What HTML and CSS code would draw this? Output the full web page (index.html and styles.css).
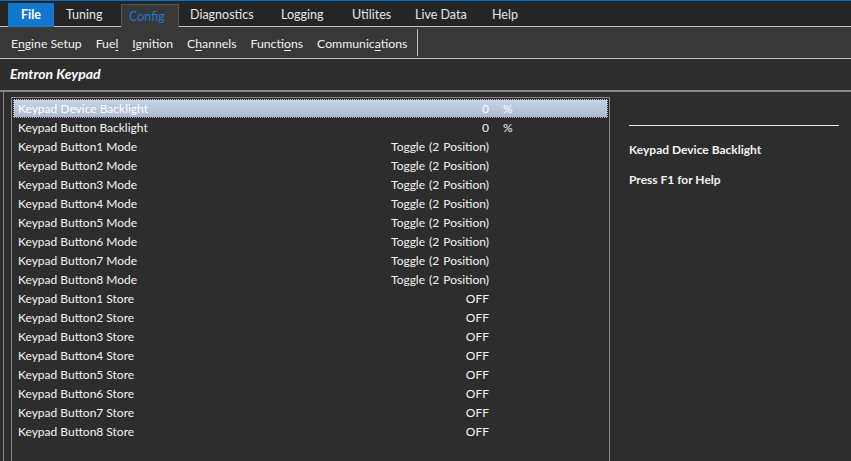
FILE: index.html
```html
<!DOCTYPE html>
<html>
<head>
<meta charset="utf-8">
<link rel="stylesheet" href="styles.css">
</head>
<body>
<div class="app">
  <div class="topline"></div>
  <nav class="tabs">
    <div class="tab tab-file">File</div>
    <div class="tab tab-tuning">Tuning</div>
    <div class="tab tab-config">Config</div>
    <div class="tab tab-diag">Diagnostics</div>
    <div class="tab tab-log">Logging</div>
    <div class="tab tab-util">Utilites</div>
    <div class="tab tab-live">Live Data</div>
    <div class="tab tab-help">Help</div>
  </nav>
  <nav class="submenu">
    <span class="item">E<u>n</u>gine Setup</span>
    <span class="item">Fue<u>l</u></span>
    <span class="item"><u>I</u>gnition</span>
    <span class="item">C<u>h</u>annels</span>
    <span class="item">Functi<u>o</u>ns</span>
    <span class="item">Communic<u>a</u>tions</span>
    <span class="sep"></span>
  </nav>
  <div class="titlebar">Emtron Keypad</div>
  <div class="content">
    <div class="list">
      <div class="row sel"><span class="label">Keypad Device Backlight</span><span class="val">0</span><span class="unit">%</span></div>
      <div class="row"><span class="label">Keypad Button Backlight</span><span class="val">0</span><span class="unit">%</span></div>
      <div class="row"><span class="label">Keypad Button1 Mode</span><span class="val">Toggle (2 Position)</span><span class="unit"></span></div>
      <div class="row"><span class="label">Keypad Button2 Mode</span><span class="val">Toggle (2 Position)</span><span class="unit"></span></div>
      <div class="row"><span class="label">Keypad Button3 Mode</span><span class="val">Toggle (2 Position)</span><span class="unit"></span></div>
      <div class="row"><span class="label">Keypad Button4 Mode</span><span class="val">Toggle (2 Position)</span><span class="unit"></span></div>
      <div class="row"><span class="label">Keypad Button5 Mode</span><span class="val">Toggle (2 Position)</span><span class="unit"></span></div>
      <div class="row"><span class="label">Keypad Button6 Mode</span><span class="val">Toggle (2 Position)</span><span class="unit"></span></div>
      <div class="row"><span class="label">Keypad Button7 Mode</span><span class="val">Toggle (2 Position)</span><span class="unit"></span></div>
      <div class="row"><span class="label">Keypad Button8 Mode</span><span class="val">Toggle (2 Position)</span><span class="unit"></span></div>
      <div class="row"><span class="label">Keypad Button1 Store</span><span class="val">OFF</span><span class="unit"></span></div>
      <div class="row"><span class="label">Keypad Button2 Store</span><span class="val">OFF</span><span class="unit"></span></div>
      <div class="row"><span class="label">Keypad Button3 Store</span><span class="val">OFF</span><span class="unit"></span></div>
      <div class="row"><span class="label">Keypad Button4 Store</span><span class="val">OFF</span><span class="unit"></span></div>
      <div class="row"><span class="label">Keypad Button5 Store</span><span class="val">OFF</span><span class="unit"></span></div>
      <div class="row"><span class="label">Keypad Button6 Store</span><span class="val">OFF</span><span class="unit"></span></div>
      <div class="row"><span class="label">Keypad Button7 Store</span><span class="val">OFF</span><span class="unit"></span></div>
      <div class="row"><span class="label">Keypad Button8 Store</span><span class="val">OFF</span><span class="unit"></span></div>
    </div>
    <aside class="help">
      <div class="help-rule"></div>
      <div class="help-title">Keypad Device Backlight</div>
      <div class="help-text">Press F1 for Help</div>
    </aside>
  </div>
</div>
</body>
</html>
```

FILE: styles.css
```css
* { box-sizing: border-box; }
html, body {
  margin: 0;
  padding: 0;
  background: #2d2d2d;
  overflow: hidden;
}
.app {
  width: 851px;
  height: 461px;
  overflow: hidden;
  font-family: Lato, "Noto Sans", sans-serif;
  font-size: 12px;
  color: #f2f2f2;
  background: #2d2d2d;
  display: flex;
  flex-direction: column;
}
.topline {
  height: 1px;
  background: #0b6fc4;
  flex: none;
}
.tabs {
  height: 26px;
  flex: none;
  background: #252525;
  border-bottom: 1px solid #c4c4c4;
  display: flex;
  align-items: flex-end;
  padding-left: 8px;
}
.tab {
  height: 23px;
  line-height: 24px;
  font-size: 12.5px;
  color: #e6e6e6;
  padding-left: 11px;
  white-space: nowrap;
}
.tab-file {
  width: 46px;
  padding-left: 0;
  text-align: center;
  background: #1176cc;
  color: #ffffff;
  font-weight: bold;
  margin-bottom: -1px;
  height: 24px;
  line-height: 24px;
}
.tab-tuning { width: 67px; padding-left: 12px; }
.tab-config {
  width: 58px;
  padding-left: 7px;
  height: 23px;
  line-height: 23px;
  margin-bottom: -1px;
  background: #383838;
  border: 1px solid #575757;
  border-bottom: none;
  color: #1c79d2;
}
.tab-diag { width: 91px; }
.tab-log { width: 71px; }
.tab-util { width: 63px; }
.tab-live { width: 77px; }
.tab-help { width: 60px; }

.submenu {
  height: 32px;
  flex: none;
  background: #383838;
  border-bottom: 1px solid #c4c4c4;
  display: flex;
  align-items: center;
  padding-left: 11px;
  gap: 14px;
  font-size: 12.25px;
  color: #f2f2f2;
}
.submenu .item { padding-top: 1px; }
.submenu u { text-decoration-thickness: 1px; text-underline-offset: 2px; }
.sep {
  width: 1px;
  height: 27px;
  background: #b8b8b8;
  margin-left: -4px;
}
.titlebar {
  height: 33px;
  flex: none;
  background: #2d2d2d;
  border-bottom: 2px solid #8a8a8a;
  padding-left: 10px;
  line-height: 29px;
  font-weight: bold;
  font-style: italic;
  font-size: 14px;
  color: #ffffff;
}
.content {
  flex: 1;
  display: flex;
  margin-left: 3px;
  border-left: 1px solid #8a8a8a;
  padding-top: 5px;
  min-height: 0;
}
.list {
  width: 599px;
  margin-left: 7px;
  height: 400px;
  border: 1px solid #8c8c8c;
  border-bottom: none;
  padding: 1px 1px 0 1px;
  flex: none;
}
.row {
  height: 19px;
  display: grid;
  grid-template-columns: 1fr 121px 119px;
  align-items: center;
  padding-left: 5px;
  white-space: nowrap;
  color: #f4f4f4;
}
.row.sel {
  height: 19px;
  background: linear-gradient(#c9d5e5, #a9b9cd);
  outline: 1px dotted #1a1a1a;
  outline-offset: -1px;
  color: #ffffff;
}
.val { text-align: right; word-spacing: 1px; }
.unit { padding-left: 14px; }
.help {
  flex: 1;
  padding: 28px 12px 0 19px;
}
.help-rule {
  height: 1px;
  background: #e8e8e8;
}
.help-title {
  margin-top: 16px;
  font-weight: bold;
  height: 15px;
  line-height: 15px;
}
.help-text {
  margin-top: 15px;
  font-weight: bold;
  line-height: 15px;
}
```
